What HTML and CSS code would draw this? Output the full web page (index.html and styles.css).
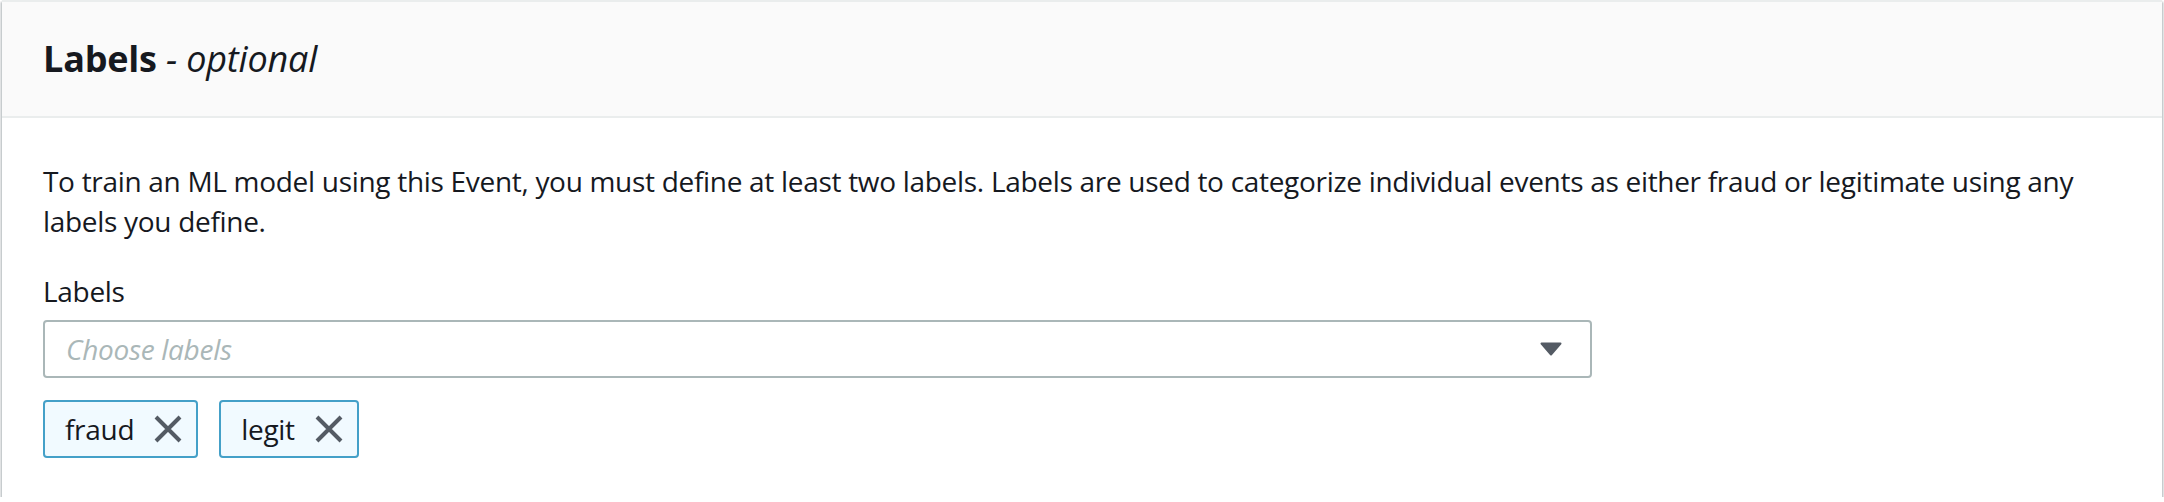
FILE: index.html
```html
<!DOCTYPE html>
<html lang="en">
<head>
<meta charset="utf-8">
<title>Labels</title>
<link rel="stylesheet" href="styles.css">
</head>
<body>
<div class="container">
  <div class="header">
    <h2 class="title">Labels <i class="optional">- optional</i></h2>
  </div>
  <div class="content">
    <p class="desc">To train an ML model using this Event, you must define at least two labels. Labels are used to categorize individual events as either fraud or legitimate using any labels you define.</p>
    <div class="field">
      <div class="field-label">Labels</div>
      <div class="select">
        <span class="placeholder">Choose labels</span>
        <svg class="caret" width="22" height="14" viewBox="0 0 22 14"><path d="M1.5 1.5 H20.5 L11 12.5 Z" fill="#545b64" stroke="#545b64" stroke-width="2" stroke-linejoin="round"/></svg>
      </div>
    </div>
    <div class="tokens">
      <div class="token"><span class="token-text">fraud</span><svg class="dismiss" width="28" height="28" viewBox="0 0 28 28"><path d="M2 2 L26 26 M26 2 L2 26" stroke="#545b64" stroke-width="4" fill="none"/></svg></div>
      <div class="token"><span class="token-text">legit</span><svg class="dismiss" width="28" height="28" viewBox="0 0 28 28"><path d="M2 2 L26 26 M26 2 L2 26" stroke="#545b64" stroke-width="4" fill="none"/></svg></div>
    </div>
  </div>
</div>
</body>
</html>
```

FILE: styles.css
```css
html, body {
  margin: 0;
  padding: 0;
  background: #ffffff;
}
body {
  font-family: "Open Sans", Lato, sans-serif;
  color: #16191f;
  letter-spacing: -0.3px;
}
.container {
  margin: 0 2px 0 2px;
  height: 497px;
  box-sizing: border-box;
  border-top: 2px solid #eaeded;
  background: #ffffff;
  box-shadow: 0 2px 2px 0 rgba(0, 28, 36, 0.3), 2px 2px 2px 0 rgba(0, 28, 36, 0.15), -2px 2px 2px 0 rgba(0, 28, 36, 0.15);
}
.header {
  background: #fafafa;
  border-bottom: 2px solid #eaeded;
  height: 116px;
  box-sizing: border-box;
  padding: 0 40px 0 41px;
  display: flex;
  align-items: center;
}
.title {
  margin: 0;
  font-size: 36px;
  line-height: 44px;
  font-weight: 700;
  color: #16191f;
  letter-spacing: -0.2px;
}
.optional {
  font-weight: 400;
}
.content {
  padding: 43px 40px 40px 41px;
}
.desc {
  margin: 0;
  font-size: 28px;
  line-height: 40px;
}
.field {
  margin-top: 30px;
}
.field-label {
  font-size: 28px;
  line-height: 40px;
}
.select {
  margin-top: 9px;
  width: 1549px;
  height: 58px;
  box-sizing: border-box;
  border: 2px solid #aab7b8;
  border-radius: 4px;
  display: flex;
  align-items: center;
  justify-content: space-between;
  padding: 0 28px 0 21px;
}
.placeholder {
  font-size: 28px;
  font-style: italic;
  color: #aab7b8;
}
.caret {
  display: block;
}
.tokens {
  margin-top: 22px;
  display: flex;
  gap: 21px;
}
.token {
  height: 58px;
  box-sizing: border-box;
  border: 2px solid #44a0c8;
  border-radius: 4px;
  background: #f1faff;
  display: flex;
  align-items: center;
  gap: 20px;
  padding: 0 14px 0 20px;
}
.token-text {
  font-size: 28px;
}
.dismiss {
  display: block;
}
```
